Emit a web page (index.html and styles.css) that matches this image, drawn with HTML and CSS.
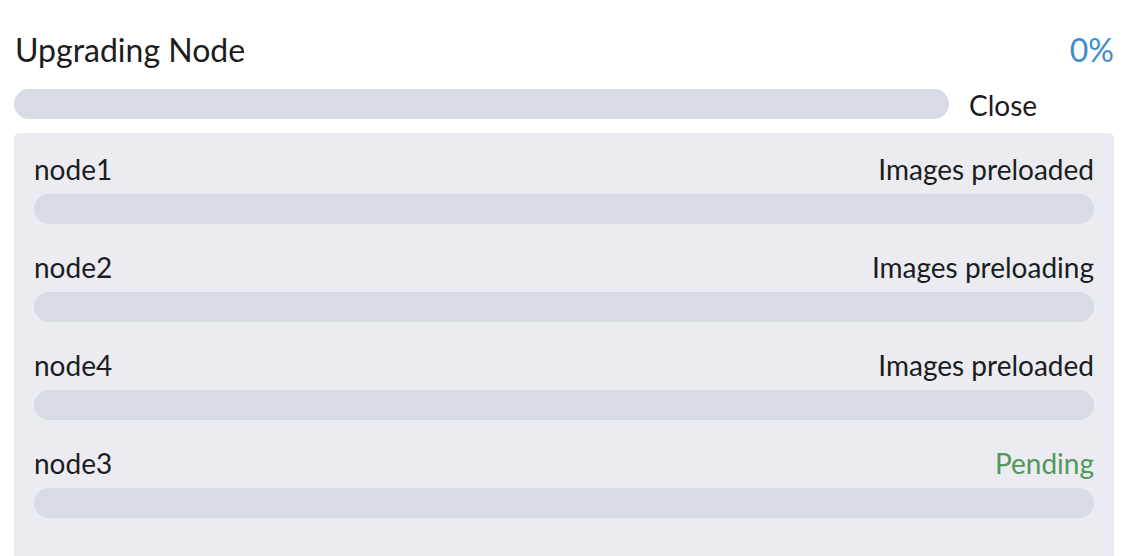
FILE: index.html
```html
<!DOCTYPE html>
<html lang="en">
<head>
  <meta charset="utf-8" />
  <title>Upgrading Node</title>
  <link rel="stylesheet" href="styles.css">
</head>
<body>
<div class="upgrade">
  <div class="upgrade-head">
    <h2 class="upgrade-title">Upgrading Node</h2>
    <span class="upgrade-percent">0%</span>
  </div>
  <div class="upgrade-main">
    <div class="bar bar-main"><div class="bar-fill" style="width: 0%"></div></div>
    <span class="upgrade-close">Close</span>
  </div>
  <!-- per node progress -->
  <div class="node-list">
    <div class="node-row">
      <div class="node-info">
        <span class="node-name">node1</span>
        <span class="node-status">Images preloaded</span>
      </div>
      <div class="bar"><div class="bar-fill" style="width: 0%"></div></div>
    </div>
    <div class="node-row">
      <div class="node-info">
        <span class="node-name">node2</span>
        <span class="node-status">Images preloading</span>
      </div>
      <div class="bar"><div class="bar-fill" style="width: 0%"></div></div>
    </div>
    <div class="node-row">
      <div class="node-info">
        <span class="node-name">node4</span>
        <span class="node-status">Images preloaded</span>
      </div>
      <div class="bar"><div class="bar-fill" style="width: 0%"></div></div>
    </div>
    <div class="node-row">
      <div class="node-info">
        <span class="node-name">node3</span>
        <span class="node-status pending">Pending</span>
      </div>
      <div class="bar"><div class="bar-fill" style="width: 0%"></div></div>
    </div>
  </div>
</div>
</body>
</html>
```

FILE: styles.css
```css
body{
  margin: 0;
  background: #fff;
  color: #1b1c1e;
  font-family: Lato, sans-serif;
}
.upgrade{
  padding: 30px 14px 0 14px;
}
.upgrade-head{
  display: flex;
  justify-content: space-between;
  align-items: baseline;
  padding-left: 1px;
}
.upgrade-title{
  margin: 0;
  font-size: 32px;
  font-weight: normal;
  line-height: 40px;
}
.upgrade-percent{
  font-size: 32px;
  color: #3b8ed0;
}
.upgrade-main{
  display: flex;
  align-items: center;
  gap: 20px;
  margin-top: 18px;
}
.bar{
  height: 30px;
  border-radius: 15px;
  background: #d8dae4;
  overflow: hidden;
}
.bar-main{
  width: 935px;
}
.bar-fill{
  height: 100%;
  background: #3b8ed0;
}
.upgrade-close{
  font-size: 28px;
  line-height: 30px;
  padding-top: 2px;
  cursor: pointer;
}
.node-list{
  margin-top: 13px;
  background: #ebecf1;
  border-radius: 5px 5px 0 0;
  padding: 21px 20px 40px 20px;
  display: flex;
  flex-direction: column;
  gap: 28px;
}
.node-info{
  display: flex;
  justify-content: space-between;
  align-items: baseline;
  font-size: 28px;
  line-height: 30px;
  margin-bottom: 10px;
}
.node-status.pending{
  color: #55965a;
}
```
